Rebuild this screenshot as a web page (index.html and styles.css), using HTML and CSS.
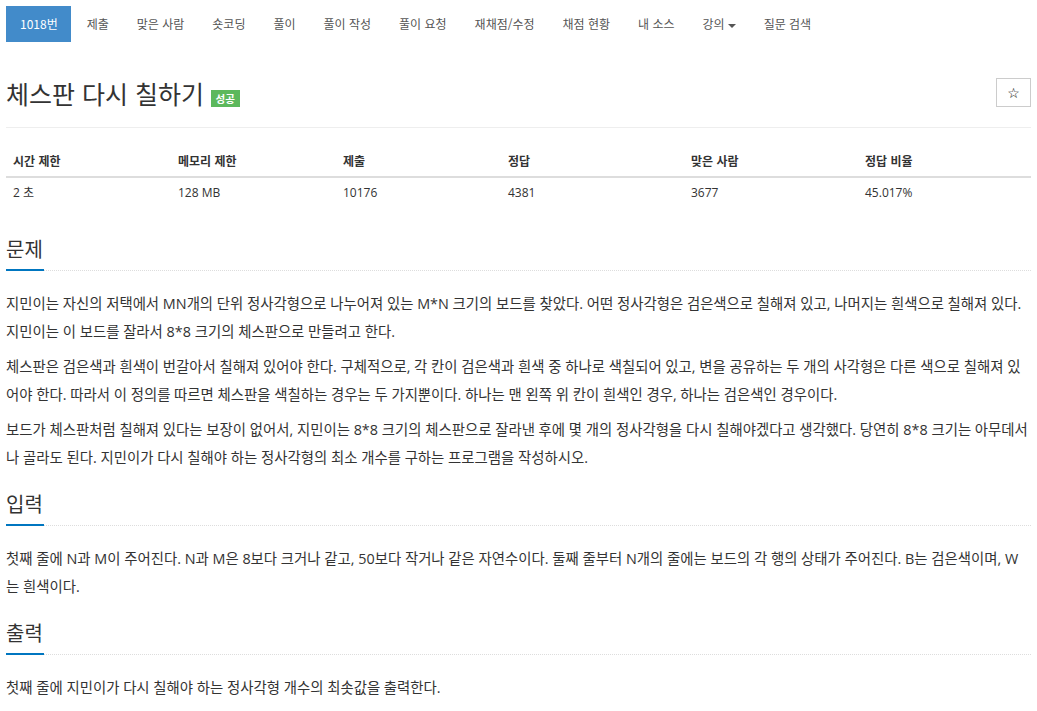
FILE: index.html
```html
<!DOCTYPE html>
<html lang="ko">
  <head>
    <meta charset="UTF-8" />
    <title>1018번: 체스판 다시 칠하기</title>
    <link rel="stylesheet" href="styles.css">
  </head>
  <body>
    <!-- 문제 메뉴 -->
    <ul class="problem-menu">
      <li class="active"><a href="#">1018번</a></li>
      <li><a href="#">제출</a></li>
      <li><a href="#">맞은 사람</a></li>
      <li><a href="#">숏코딩</a></li>
      <li><a href="#">풀이</a></li>
      <li><a href="#">풀이 작성</a></li>
      <li><a href="#">풀이 요청</a></li>
      <li><a href="#">재채점/수정</a></li>
      <li><a href="#">채점 현황</a></li>
      <li><a href="#">내 소스</a></li>
      <li><a href="#">강의<span class="caret"></span></a></li>
      <li><a href="#">질문 검색</a></li>
    </ul>

    <div class="page-header">
      <h1>
        <span class="problem-title">체스판 다시 칠하기</span>
        <span class="label-success">성공</span>
      </h1>
      <button class="btn-star" type="button">&#9734;</button>
    </div>

    <table class="problem-info">
      <thead>
        <tr>
          <th class="c1">시간 제한</th>
          <th class="c2">메모리 제한</th>
          <th class="c3">제출</th>
          <th class="c4">정답</th>
          <th class="c5">맞은 사람</th>
          <th>정답 비율</th>
        </tr>
      </thead>
      <tbody>
        <tr>
          <td>2 초</td>
          <td>128 MB</td>
          <td>10176</td>
          <td>4381</td>
          <td>3677</td>
          <td>45.017%</td>
        </tr>
      </tbody>
    </table>

    <section class="problem-section">
      <div class="headline"><h2>문제</h2></div>
      <div class="problem-text">
        <p>지민이는 자신의 저택에서 MN개의 단위 정사각형으로 나누어져 있는 M*N 크기의 보드를 찾았다. 어떤 정사각형은 검은색으로 칠해져 있고, 나머지는 흰색으로 칠해져 있다. 지민이는 이 보드를 잘라서 8*8 크기의 체스판으로 만들려고 한다.</p>
        <p>체스판은 검은색과 흰색이 번갈아서 칠해져 있어야 한다. 구체적으로, 각 칸이 검은색과 흰색 중 하나로 색칠되어 있고, 변을 공유하는 두 개의 사각형은 다른 색으로 칠해져 있어야 한다. 따라서 이 정의를 따르면 체스판을 색칠하는 경우는 두 가지뿐이다. 하나는 맨 왼쪽 위 칸이 흰색인 경우, 하나는 검은색인 경우이다.</p>
        <p>보드가 체스판처럼 칠해져 있다는 보장이 없어서, 지민이는 8*8 크기의 체스판으로 잘라낸 후에 몇 개의 정사각형을 다시 칠해야겠다고 생각했다. 당연히 8*8 크기는 아무데서나 골라도 된다. 지민이가 다시 칠해야 하는 정사각형의 최소 개수를 구하는 프로그램을 작성하시오.</p>
      </div>
    </section>

    <section class="problem-section">
      <div class="headline"><h2>입력</h2></div>
      <div class="problem-text">
        <p>첫째 줄에 N과 M이 주어진다. N과 M은 8보다 크거나 같고, 50보다 작거나 같은 자연수이다. 둘째 줄부터 N개의 줄에는 보드의 각 행의 상태가 주어진다. B는 검은색이며, W는 흰색이다.</p>
      </div>
    </section>

    <section class="problem-section">
      <div class="headline"><h2>출력</h2></div>
      <div class="problem-text">
        <p>첫째 줄에 지민이가 다시 칠해야 하는 정사각형 개수의 최솟값을 출력한다.</p>
      </div>
    </section>
  </body>
</html>
```

FILE: styles.css
```css
body {
  margin: 6px;
  font-family: "Open Sans", "Noto Sans CJK KR", sans-serif;
  font-size: 14px;
  color: #333;
  background: #fff;
}

a {
  color: #555;
  text-decoration: none;
}

/* 문제 메뉴 */
.problem-menu {
  display: flex;
  list-style: none;
  margin: 0;
  padding: 0;
  font-family: "Noto Sans CJK KR", sans-serif;
  font-size: 12px;
}

.problem-menu li a {
  display: block;
  height: 36px;
  line-height: 36px;
  padding: 0 14px;
}

.problem-menu li.active a {
  background-color: #428bca;
  color: #fff;
  padding: 0 13px 0 14px;
}

.problem-menu li.active + li a {
  padding-left: 16px;
}

.caret {
  display: inline-block;
  width: 0;
  height: 0;
  margin-left: 3px;
  vertical-align: middle;
  border-top: 4px solid #555;
  border-left: 4px solid transparent;
  border-right: 4px solid transparent;
}

/* 제목 */
.page-header {
  display: flex;
  justify-content: space-between;
  align-items: flex-start;
  margin-top: 31px;
  padding-bottom: 13px;
  border-bottom: 1px solid #eee;
}

.page-header h1 {
  margin: 0;
  font-weight: 400;
  font-size: 25px;
  line-height: 40px;
}

.problem-title {
  font-family: "Noto Sans CJK KR", sans-serif;
  color: #333;
}

.label-success {
  display: inline-block;
  vertical-align: middle;
  padding: 1px 5px;
  font-family: "Noto Sans CJK KR", sans-serif;
  font-size: 10.5px;
  font-weight: 700;
  line-height: 15px;
  color: #fff;
  background-color: #5cb85c;
  position: relative;
  top: 1px;
}

.btn-star {
  width: 35px;
  height: 29px;
  margin-top: 5px;
  border: 1px solid #ccc;
  background: #fff;
  color: #000;
  font-size: 14px;
  font-family: "DejaVu Sans", sans-serif;
  padding: 0;
}

/* 정보 표 */
.problem-info {
  width: 100%;
  border-collapse: collapse;
  margin-top: 17px;
  margin-bottom: 27px;
  font-size: 12px;
}

.problem-info th {
  text-align: left;
  font-weight: 700;
  font-family: "Noto Sans CJK KR", sans-serif;
  padding: 8px 7px;
  line-height: 15px;
  border-bottom: 2px solid #ddd;
}

.problem-info td {
  padding: 7px 7px;
  line-height: 16px;
}

.problem-info .c1,
.problem-info .c2,
.problem-info .c3 {
  width: 151px;
}

.problem-info .c4 {
  width: 169px;
}

.problem-info .c5 {
  width: 160px;
}

/* 문제 본문 */
.problem-section {
  margin-top: 18px;
}

.headline {
  border-bottom: 1px dotted #ddd;
  margin-bottom: 19px;
}

.headline h2 {
  display: inline-block;
  margin: 0 0 -1px;
  padding: 0 1px 7px 0;
  font-size: 20px;
  font-weight: 400;
  line-height: 27px;
  font-family: "Noto Sans CJK KR", sans-serif;
  color: #333;
  border-bottom: 2px solid #0076c0;
  min-width: 35px;
}

.problem-text p {
  margin: 0 0 7px;
  line-height: 28px;
  font-size: 14.4px;
}
```
